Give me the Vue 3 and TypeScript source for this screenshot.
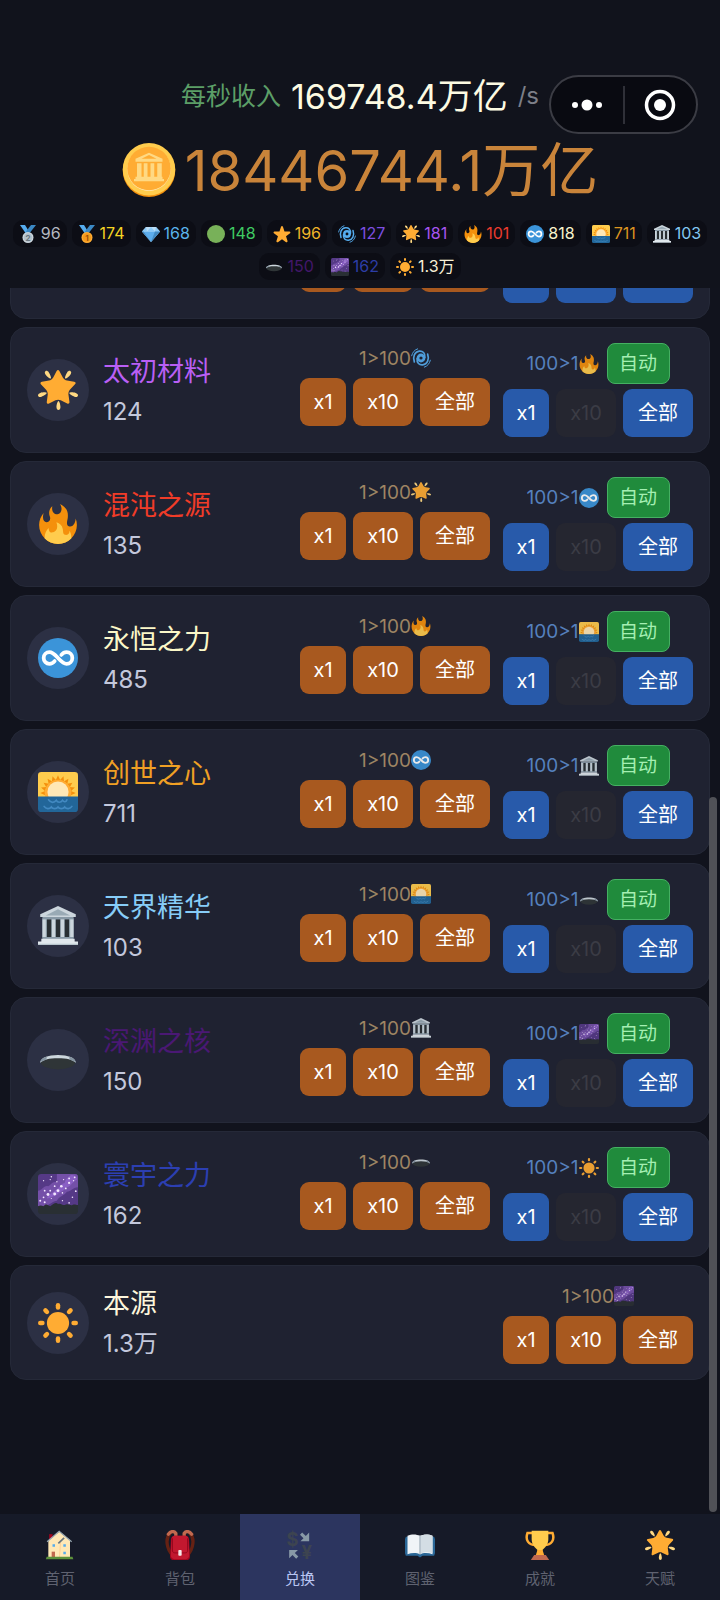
<script setup lang="ts">
interface Chip {
  icon: string
  value: string
  unit?: string
  color: string
}

interface Material {
  icon: string
  name: string
  count: string
  unit?: string
  color: string
  down: string
  up?: string
  tenEnabled?: boolean
}

interface Tab {
  icon: string
  label: string
  active?: boolean
}

interface Mark {
  text: string
  x: number
  y: number
  size: number
  fill: string
}

const chips: Chip[] = [
  { icon: 'silver', value: '96', color: '#b4b8c0' },
  { icon: 'gold', value: '174', color: '#f5d423' },
  { icon: 'gem', value: '168', color: '#5ab4ec' },
  { icon: 'green', value: '148', color: '#3fca63' },
  { icon: 'star', value: '196', color: '#f0b429' },
  { icon: 'cyclone', value: '127', color: '#7d4fe0' },
  { icon: 'glow', value: '181', color: '#a855f0' },
  { icon: 'fire', value: '101', color: '#ea3b2e' },
  { icon: 'infinity', value: '818', color: '#f7f3cc' },
  { icon: 'sunrise', value: '711', color: '#dd9420' },
  { icon: 'temple', value: '103', color: '#83c8f2' },
  { icon: 'hole', value: '150', color: '#43176a' },
  { icon: 'galaxy', value: '162', color: '#2c3da6' },
  { icon: 'sun', value: '1.3', unit: '万', color: '#f7f0d6' },
]

const materials: Material[] = [
  { icon: 'cyclone', name: '', count: '', color: '#7d4fe0', down: 'star', up: 'glow', tenEnabled: true },
  { icon: 'glow', name: '太初材料', count: '124', color: '#b95ff5', down: 'cyclone', up: 'fire' },
  { icon: 'fire', name: '混沌之源', count: '135', color: '#f03c28', down: 'glow', up: 'infinity' },
  { icon: 'infinity', name: '永恒之力', count: '485', color: '#fbf8c8', down: 'fire', up: 'sunrise' },
  { icon: 'sunrise', name: '创世之心', count: '711', color: '#f0a024', down: 'infinity', up: 'temple' },
  { icon: 'temple', name: '天界精华', count: '103', color: '#87cdf8', down: 'sunrise', up: 'hole' },
  { icon: 'hole', name: '深渊之核', count: '150', color: '#4a1874', down: 'temple', up: 'galaxy' },
  { icon: 'galaxy', name: '寰宇之力', count: '162', color: '#2c3fb2', down: 'hole', up: 'sun' },
  { icon: 'sun', name: '本源', count: '1.3', unit: '万', color: '#fdf6dc', down: 'galaxy' },
]

const tabs: Tab[] = [
  { icon: 'house', label: '首页' },
  { icon: 'backpack', label: '背包' },
  { icon: 'exchange', label: '兑换', active: true },
  { icon: 'book', label: '图鉴' },
  { icon: 'trophy', label: '成就' },
  { icon: 'glow', label: '天赋' },
]

const marks: Record<string, Mark[]> = {
  silver: [{ text: '2', x: 18, y: 31, size: 16, fill: '#66757f' }],
  gold: [{ text: '1', x: 18, y: 31, size: 16, fill: '#9a4f08' }],
  exchange: [
    { text: '$', x: 9, y: 19, size: 22, fill: '#3d4450' },
    { text: '¥', x: 26, y: 35, size: 22, fill: '#3d4450' },
  ],
}

const rays: number[] = [0, 45, 90, 135, 180, 225, 270, 315]
const sunriseRays: number[] = [-90, -72, -54, -36, -18, 0, 18, 36, 54, 72, 90]
const stars: [number, number, number][] = [
  [5, 6, 0.6], [11, 5, 0.6], [12, 2.5, 0.7], [17, 7, 0.6], [23, 5, 0.6], [28, 4, 0.8], [33, 3, 0.8],
  [15, 11, 0.8], [21, 11, 1.2], [25, 13, 0.8], [28, 8, 1], [32, 6, 0.6], [6, 15, 0.8], [11, 15, 0.8],
  [18, 15, 1.3], [22, 17, 0.7], [9, 18.5, 1.3], [15, 18, 1.3], [34, 15.5, 0.8], [5, 21, 0.8], [31, 21, 0.7],
  [2, 24, 0.9], [6, 25.5, 0.9], [22, 24, 0.6], [28, 26, 0.7], [12, 22, 0.5],
]
</script>

<template>
  <div class="app">
    <svg class="defs" aria-hidden="true">
      <symbol id="glow" viewBox="0 0 36 36">
        <path fill="#ffac33" d="M28.84 17.638c-.987 1.044-1.633 3.067-1.438 4.493l.892 6.441c.197 1.427-.701 2.087-1.996 1.469l-5.851-2.796c-1.295-.62-3.408-.611-4.7.018l-5.826 2.842c-1.291.629-2.193-.026-2.007-1.452l.843-6.449c.186-1.427-.475-3.444-1.47-4.481l-4.494-4.688c-.996-1.037-.655-2.102.755-2.365l6.37-1.188c1.41-.263 3.116-1.518 3.793-2.789L16.762.956c.675-1.271 1.789-1.274 2.473-.009L22.33 6.66c.686 1.265 2.4 2.507 3.814 2.758l6.378 1.141c1.412.252 1.761 1.314.774 2.359l-4.456 4.72z" />
        <path fill="#ffd983" d="M9.783 2.181c1.023 1.413 2.446 4.917 1.717 5.447-.728.531-3.607-1.91-4.63-3.323-1.022-1.413-.935-2.668-.131-3.254.804-.587 2.02-.282 3.044 1.13zm19.348 2.124C28.109 5.718 25.23 8.16 24.5 7.627c-.729-.53.695-4.033 1.719-5.445C27.242.768 28.457.463 29.262 1.051c.803.586.89 1.841-.131 3.254zM16.625 33.291c-.001-1.746.898-5.421 1.801-5.421.899 0 1.798 3.675 1.797 5.42 0 1.747-.804 2.712-1.8 2.71-.994.002-1.798-.962-1.798-2.709zm16.179-9.262c-1.655-.539-4.858-2.533-4.579-3.395.277-.858 4.037-.581 5.69-.041 1.655.54 2.321 1.605 2.013 2.556-.308.95-1.469 1.42-3.124.88zM2.083 20.594c1.655-.54 5.414-.817 5.694.044.276.857-2.928 2.854-4.581 3.392-1.654.54-2.818.07-3.123-.88-.308-.95.354-2.015 2.01-2.556z" />
      </symbol>
      <symbol id="star" viewBox="0 0 36 36">
        <path fill="#ffac33" d="M27.287 34.627c-.404 0-.806-.124-1.152-.371L18 28.422l-8.135 5.834c-.343.247-.743.371-1.151.371-.408 0-.811-.126-1.157-.38-.688-.5-.976-1.384-.713-2.193l3.034-9.792-8.062-5.681c-.685-.505-.97-1.393-.708-2.203.264-.808 1.016-1.36 1.866-1.363l9.947-.014L16.12 3.294c.271-.802 1.023-1.34 1.871-1.34.848 0 1.6.538 1.871 1.34L22.991 13l9.94.014c.85.003 1.604.555 1.866 1.363.263.81-.022 1.698-.708 2.203l-8.062 5.681 3.037 9.791c.262.81-.026 1.694-.713 2.194-.346.255-.751.381-1.128.381z" />
      </symbol>
      <symbol id="fire" viewBox="0 0 36 36">
        <path fill="#f4900c" d="M35 19c0-2.062-.367-4.039-1.04-5.868-.46 5.389-3.333 8.157-6.335 6.868-2.812-1.208-.917-5.917-.777-8.164.236-3.809-.012-8.169-6.931-11.794 2.875 5.5.333 8.917-2.333 9.125-2.958.231-5.667-2.542-4.667-7.042-3.238 2.386-3.332 6.402-2.333 9 1.042 2.708-.042 4.958-2.583 5.208-2.84.28-4.418-3.041-2.963-8.333C2.52 10.965 1 14.805 1 19c0 9.389 7.611 17 17 17s17-7.611 17-17z" />
        <path fill="#ffcc4d" d="M28.394 23.999c.148 3.084-2.561 4.293-4.019 3.709-2.106-.843-1.541-2.291-2.083-5.291s-2.625-5.083-5.708-6c2.25 6.333-1.247 8.667-3.08 9.084-1.872.426-3.753-.001-3.968-4.007C7.352 23.668 6 26.676 6 30c0 .368.023.73.055 1.09C9.125 34.124 13.342 36 18 36s8.875-1.876 11.945-4.91c.032-.36.055-.722.055-1.09 0-2.187-.584-4.236-1.606-6.001z" />
      </symbol>
      <symbol id="infinity" viewBox="0 0 36 36">
        <circle cx="18" cy="18" r="18" fill="#3b94d9" />
        <path fill="none" stroke="#fff" stroke-width="3.400" stroke-linecap="round" d="M15 20.800C13.500 22.600 12 23.200 10.300 23.200c-2.900 0-5.200-2.300-5.200-5.200s2.300-5.200 5.200-5.200c3 0 4.900 2.200 7.700 5.200s4.700 5.200 7.700 5.200c2.900 0 5.200-2.300 5.200-5.200s-2.300-5.200-5.200-5.200c-1.700 0-3.200.6-4.700 2.400" />
      </symbol>
      <symbol id="sunrise" viewBox="0 0 36 36">
        <path fill="#ffcc4d" d="M3 0h30a3 3 0 0 1 3 3v20H0V3a3 3 0 0 1 3-3z" />
        <path v-for="r in sunriseRays" :key="r" fill="#f4900c" :transform="`rotate(${r} 18 19)`" d="M16 7.500 18 3l2 4.500z" />
        <circle cx="18" cy="19" r="12" fill="#ffac33" />
        <circle cx="18" cy="18" r="9.500" fill="#ffe8b6" />
        <path fill="#226699" d="M0 22h36v11a3 3 0 0 1-3 3H3a3 3 0 0 1-3-3z" />
        <path fill="none" stroke="#4289c1" stroke-width="1.500" stroke-linecap="round" d="M9.500 25c2 3 5 3 7 .5 1 2 4 2.500 5.500 0 1.500 2 3.500 1.500 4-.5M5.500 31c1.500 2.500 5 2.500 6.500.5 1.500 2 4.500 2 6 0 1.500 2 4.500 2 6 0 1.500 2 5 2 6.500-.5" />
      </symbol>
      <symbol id="temple" viewBox="0 0 36 36">
        <path fill="#99aab5" d="M4 11h28v18H4z" />
        <path fill="#292f33" d="M8 12h4v16H8zM16 12h4v16h-4zM24 12h4v16h-4z" />
        <path fill="#ccd6dd" d="M4 12h3v16H4zM12.500 12h3v16h-3zM20.500 12h3v16h-3zM29 12h3v16h-3z" />
        <path fill="#8899a6" d="M4 10h28v2H4zM4 28h28v2H4z" />
        <path fill="#ccd6dd" d="M18 0 34 7.500V10H2V7.500z" />
        <path fill="#99aab5" d="M18 3 29 8.500H7z" />
        <path fill="#e1e8ed" d="M3 29.500h30V32H3zM0 32h36v3H0z" />
        <path fill="#b8c5cd" d="M0 34h36v1H0z" />
      </symbol>
      <symbol id="hole" viewBox="0 0 36 36">
        <ellipse cx="18" cy="20" rx="15.500" ry="6.500" fill="#2f3537" />
        <path fill="#ccd6dd" d="M2 20.500C2 16 9 13.500 18 13.500s16 2.500 16 7c-3-2.700-8-4-16-4s-13 1.300-16 4z" />
        <path fill="#8493a0" d="M2 20.500c0-2.500 2.500-4.500 6-5.600L7.500 17.800c-2.500.7-4.300 1.600-5.500 2.700zM34 20.500c0-2.500-2.500-4.500-6-5.600l.5 2.900c2.500.7 4.300 1.600 5.500 2.700z" />
      </symbol>
      <symbol id="galaxy" viewBox="0 0 36 36">
        <path fill="#553986" d="M3 0h30a3 3 0 0 1 3 3v28H0V3a3 3 0 0 1 3-3z" />
        <path fill="#7450a8" d="M17 0h16a3 3 0 0 1 3 3v9c-5 0-6 4-10 4-3 4-7 4-9 8-6 1-7 6-17 5V15c4 0 5-5 9-4 3-1 3-4 8-4z" />
        <path fill="#8a5fc4" d="M30 1c2 0 5 1 5 4-4 2-5 6-9 7-3 4-7 4-9 7-4 1-5 3-9 3 1-4 5-4 7-7 4-2 5-6 9-7 1-4 4-6 6-7z" />
        <circle v-for="([x, y, r], i) in stars" :key="i" :cx="x" :cy="y" :r="r" fill="#f4e8ff" />
        <path fill="#292f33" d="M0 29c2-1 3-1 5 0 2-3 4-1 6 0 3-2 5-4 7-2 3-1 3 1 6 1 3-2 5 1 7 0 2-1 3 0 5 0v5a3 3 0 0 1-3 3H3a3 3 0 0 1-3-3z" />
      </symbol>
      <symbol id="sun" viewBox="0 0 36 36">
        <circle cx="18" cy="18" r="10" fill="#ffac33" />
        <rect v-for="r in rays" :key="r" x="16" y="0" width="4" height="6" rx="2" fill="#ffac33" :transform="`rotate(${r} 18 18)`" />
      </symbol>
      <symbol id="cyclone" viewBox="0 0 36 36">
        <g fill="none" stroke="#55acee" stroke-linecap="round">
          <circle cx="18" cy="18" r="5.400" stroke-width="5" />
          <path stroke-width="3" d="M6 25C2.500 15 7 6.500 15 5.600c6-.6 11 3.400 10 11.400M30 11c3.500 10-1 18.500-9 19.400-6 .6-11-3.400-10-11.400" />
          <path stroke-width="1.800" d="M1.200 14C2.500 8 6 3.500 12 1.500M34.800 22c-1.300 6-4.800 10.500-10.800 12.500" />
        </g>
      </symbol>
      <symbol id="green" viewBox="0 0 36 36">
        <circle cx="18" cy="18" r="18" fill="#78b159" />
      </symbol>
      <symbol id="gem" viewBox="0 0 36 36">
        <path fill="#bdddf4" d="M8 4h20l8 9-18 21L0 13z" />
        <path fill="#5dadec" d="M0 13h36L18 34z" />
        <path fill="#8ccaf7" d="M10 13 18 4l8 9zM8 4 0 13h10zM28 4l8 9H26z" />
        <path fill="#4289c1" d="M26 13h10L18 34zM0 13h3l15 21z" />
      </symbol>
      <symbol id="silver" viewBox="0 0 36 36">
        <path fill="#55acee" d="M2 0h10l8 13-5 6z" />
        <path fill="#3b88c3" d="M34 0H24L14 13l5 6z" />
        <circle cx="18" cy="25" r="11" fill="#ccd6dd" />
        <circle cx="18" cy="25" r="8.500" fill="#b3c0c9" />
      </symbol>
      <symbol id="gold" viewBox="0 0 36 36">
        <path fill="#55acee" d="M2 0h10l8 13-5 6z" />
        <path fill="#3b88c3" d="M34 0H24L14 13l5 6z" />
        <circle cx="18" cy="25" r="11" fill="#ffac33" />
        <circle cx="18" cy="25" r="8.500" fill="#f49a1c" />
      </symbol>
      <symbol id="coin" viewBox="0 0 36 36">
        <circle cx="18" cy="18.500" r="17.500" fill="#f4900c" />
        <circle cx="18" cy="17.500" r="17.500" fill="#ffcc4d" />
        <circle cx="18" cy="17.500" r="14.500" fill="#ffe8b6" />
        <circle cx="18" cy="17" r="14.500" fill="#ffac33" />
        <path fill="#ffd983" d="M18 6.500 27 10.500V12.500H9V10.500zM10 13.500h3v9h-3zM14.500 13.500h2.500v9h-2.500zM19 13.500h2.500v9H19zM23.500 13.500h3v9h-3zM9 22.500h18v1.500H9zM8 24h20v1.500H8z" />
        <path fill="#ffac33" d="m18 8 5 2.500H13z" />
      </symbol>
      <symbol id="house" viewBox="0 0 36 36">
        <path fill="#a0041e" d="M5 5h4v7H5z" />
        <path fill="#ffe8b6" d="M4 13 17 2l13 10v21H4z" />
        <path fill="#ffcc8d" d="m18 14-1 19h1l1-18z" />
        <path fill="none" stroke="#9aaab4" stroke-width="1.500" d="M2.500 14 17 1.500 32 14" />
        <path stroke="#66757f" stroke-width="2" d="m16 16 7-6.500" />
        <path fill="#55acee" d="M9 17h3v3H9zM22 17h3v3h-3zM22 26h3v3h-3z" />
        <path fill="#c1694f" d="M8 26h4v7H8z" />
        <path fill="#5c913b" d="M2 32h31l1 3H1z" />
      </symbol>
      <symbol id="backpack" viewBox="0 0 36 36">
        <g fill="none" stroke-linecap="round">
          <path stroke="#662113" stroke-width="4" d="M6 4C0 10 2 23 9 30M30 4c6 6 4 19-3 26" />
          <path stroke="#c1694f" stroke-width="4" d="M4 5c3-4 7-4 9-1v4M32 5c-3-4-7-4-9-1v4" />
        </g>
        <path fill="#a0041e" d="M12 7h12c4 0 5 3 5 6l1 19c0 3-2 4-4 4H10c-2 0-4-1-4-4l1-19c0-3 1-6 5-6z" />
        <path fill="#c2182f" d="M12 7h12c3 0 4 2 4 4l1 20c0 2-2 4-4 4H11c-2 0-4-2-4-4l1-20c0-2 1-4 4-4z" />
        <path fill="none" stroke="#8f041b" d="M9 10v15c0 2 2 2.500 3 2.500h12c2 0 3-1 3-2.500V10" />
        <rect x="16" y="24" width="4" height="7" rx="1" fill="#f5e8e8" />
      </symbol>
      <symbol id="exchange" viewBox="0 0 36 36">
        <path fill="#8899a6" d="M29 3v10.500H18.500l3.700-3.700-4.200-4.200 2.600-2.600 4.400 4.200zM5 34V24h10.500l-3.700 3.700 4.200 4.200-2.600 2.600-4.400-4.400z" />
      </symbol>
      <symbol id="book" viewBox="0 0 36 36">
        <path fill="#2a6797" d="M1 8h34l1 3v17l-1 3H21l-3 2-3-2H1l-1-3V11z" />
        <path fill="#f0f4f7" d="M3 7c5-2.500 11-2 15 0v22c-4-2-10-2-15 0zM33 7c-5-2.500-11-2-15 0v22c4-2 10-2 15 0z" />
        <path fill="#d3dde4" d="M18 8c4-3 10-3.500 15-1v21c-5-2-11-1.500-15 1z" />
        <path fill="#b4c1ca" d="M17 7h2v22h-2z" />
      </symbol>
      <symbol id="trophy" viewBox="0 0 36 36">
        <path fill="none" stroke="#ffac33" stroke-width="3" d="M9 3.500H3C0 12 4 18 13 18M27 3.500h6C36 12 32 18 23 18" />
        <path fill="#ffcc4d" d="M8 1h20v10c0 6-4 10-7 13v5h-6v-5c-3-3-7-7-7-13z" />
        <path fill="#ffac33" d="M15 24h6l2 6H13z" />
        <path fill="#c1694f" d="M11 30h14l4 6H7z" />
      </symbol>
    </svg>

    <header class="top">
      <div class="income">
        <span class="income-label">每秒收入</span>
        <span class="income-value">169748.4<span class="income-unit">万亿</span></span>
        <span class="per">/s</span>
      </div>
      <div class="balance">
        <svg class="coin" aria-hidden="true"><use href="#coin" /></svg>
        <span class="balance-value">18446744.1<span class="balance-unit">万亿</span></span>
      </div>
      <ul class="chips">
        <li v-for="chip in chips" :key="chip.icon" class="chip" :style="{ color: chip.color }">
          <svg class="chip-icon" viewBox="0 0 36 36" aria-hidden="true">
            <use :href="'#' + chip.icon" width="36" height="36" />
            <text v-for="k in marks[chip.icon]" :key="k.text" :x="k.x" :y="k.y" :font-size="k.size" :fill="k.fill" text-anchor="middle" font-weight="700">{{ k.text }}</text>
          </svg>
          <span>{{ chip.value }}{{ chip.unit }}</span>
        </li>
      </ul>
      <div class="capsule">
        <button type="button" class="capsule-btn" aria-label="更多">
          <svg class="capsule-icon" viewBox="0 0 32 32" aria-hidden="true">
            <circle cx="4" cy="16" r="3" fill="#fff" />
            <circle cx="16" cy="16" r="5.500" fill="#fff" />
            <circle cx="28" cy="16" r="3" fill="#fff" />
          </svg>
        </button>
        <button type="button" class="capsule-btn" aria-label="关闭">
          <svg class="capsule-icon" viewBox="0 0 32 32" aria-hidden="true">
            <circle cx="16" cy="16" r="13.500" fill="none" stroke="#fff" stroke-width="3.500" />
            <circle cx="16" cy="16" r="6" fill="#fff" />
          </svg>
        </button>
      </div>
    </header>

    <main class="scroller">
      <section v-for="m in materials" :key="m.icon" class="card">
        <div class="avatar">
          <svg class="avatar-icon" aria-hidden="true"><use :href="'#' + m.icon" /></svg>
        </div>
        <div class="info">
          <h2 class="name" :style="{ color: m.color }">{{ m.name }}</h2>
          <p class="count">{{ m.count }}{{ m.unit }}</p>
        </div>
        <div class="group down">
          <div class="rate">
            <template v-if="m.name">1&gt;100</template>
            <svg class="rate-icon" aria-hidden="true"><use :href="'#' + m.down" /></svg>
          </div>
          <div class="actions">
            <button type="button"><template v-if="m.name">x1</template></button>
            <button type="button"><template v-if="m.name">x10</template></button>
            <button type="button"><template v-if="m.name">全部</template></button>
          </div>
        </div>
        <div v-if="m.up" class="group up">
          <div class="rate">
            <template v-if="m.name">100&gt;1</template>
            <svg class="rate-icon" aria-hidden="true"><use :href="'#' + m.up" /></svg>
            <button type="button" class="auto"><template v-if="m.name">自动</template></button>
          </div>
          <div class="actions">
            <button type="button"><template v-if="m.name">x1</template></button>
            <button type="button" :disabled="!m.tenEnabled"><template v-if="m.name">x10</template></button>
            <button type="button"><template v-if="m.name">全部</template></button>
          </div>
        </div>
      </section>
      <div class="thumb"></div>
    </main>

    <nav class="tabs">
      <a v-for="t in tabs" :key="t.label" href="#" class="tab" :class="{ active: t.active }">
        <svg class="tab-icon" viewBox="0 0 36 36" aria-hidden="true">
          <use :href="'#' + t.icon" width="36" height="36" />
          <text v-for="k in marks[t.icon]" :key="k.text" :x="k.x" :y="k.y" :font-size="k.size" :fill="k.fill" text-anchor="middle" font-weight="700">{{ k.text }}</text>
        </svg>
        <span>{{ t.label }}</span>
      </a>
    </nav>
  </div>
</template>

<style>
body {
  margin: 0;
  background: #11131d;
}
</style>

<style scoped>
.app {
  display: flex;
  flex-direction: column;
  height: 100vh;
  overflow: hidden;
  position: relative;
  background: #11131d;
  color: #c3c8dc;
  font-family: Inter, "Noto Sans CJK SC", sans-serif;
}

.defs {
  position: absolute;
  width: 0;
  height: 0;
}

button {
  font: inherit;
  line-height: 1;
  border: 0;
  padding: 0;
  cursor: pointer;
}

.top {
  flex: none;
  position: relative;
  padding: 72px 10px 8px;
  background: #11131c;
}

.income {
  display: flex;
  justify-content: center;
  align-items: center;
  gap: 10px;
  height: 48px;
  line-height: 48px;
}

.income-label {
  font-size: 25px;
  color: #5c9e67;
}

.income-value {
  font-size: 34px;
  color: #fdfbe2;
}

.income-unit {
  font-size: 35px;
}

.per {
  font-size: 24px;
  color: #7d7f88;
}

.balance {
  display: flex;
  justify-content: center;
  align-items: center;
  gap: 9px;
  height: 100px;
  line-height: 100px;
}

.coin {
  width: 54px;
  height: 54px;
}

.balance-value {
  font-size: 56px;
  color: #c9843a;
}

.balance-unit {
  font-size: 58px;
}

.chips {
  display: flex;
  flex-wrap: wrap;
  justify-content: center;
  gap: 6px 5px;
  margin: 0 -10px;
  padding: 0;
  list-style: none;
}

.chip {
  display: flex;
  align-items: center;
  gap: 4px;
  height: 27px;
  padding: 0 6px;
  border-radius: 10px;
  background: #0c0d15;
  font-size: 16px;
  line-height: 27px;
}

.chip-icon {
  width: 18px;
  height: 18px;
}

.capsule {
  position: absolute;
  top: 75px;
  right: 22px;
  display: flex;
  align-items: center;
  box-sizing: border-box;
  width: 149px;
  height: 59px;
  border: 2px solid #3b3c44;
  border-radius: 30px;
  background: #090a11;
}

.capsule-btn {
  flex: 1;
  display: flex;
  align-items: center;
  justify-content: center;
  height: 38px;
  background: none;
}

.capsule-btn + .capsule-btn {
  border-left: 2px solid #2f3038;
}

.capsule-icon {
  width: 32px;
  height: 32px;
}

.scroller {
  flex: 1;
  min-height: 0;
  position: relative;
  display: flex;
  flex-direction: column;
  justify-content: flex-end;
  gap: 8px;
  padding: 0 10px 134px;
  overflow: hidden;
}

.card {
  flex: none;
  display: flex;
  align-items: center;
  padding: 15px 16px;
  border: 1px solid #252938;
  border-radius: 16px;
  background: #1f2231;
}

.avatar {
  display: flex;
  align-items: center;
  justify-content: center;
  width: 62px;
  height: 62px;
  border-radius: 50%;
  background: #2c3044;
}

.avatar-icon {
  width: 40px;
  height: 40px;
}

.info {
  flex: 1;
  margin-left: 14px;
  padding-top: 3px;
}

.name,
.count {
  margin: 0;
  font-weight: 400;
  line-height: 40px;
}

.name {
  font-size: 27px;
}

.count {
  font-size: 24px;
}

.group {
  align-self: flex-start;
  display: flex;
  flex-direction: column;
  gap: 5px;
}

.up {
  margin-left: 13px;
}

.rate {
  display: flex;
  align-items: center;
  justify-content: center;
  height: 30px;
  font-size: 19px;
}

.down .rate {
  color: #9d8463;
}

.up .rate {
  height: 41px;
  color: #5580bd;
}

.rate-icon {
  width: 20px;
  height: 20px;
  opacity: 0.9;
}

.auto {
  box-sizing: border-box;
  width: 63px;
  height: 41px;
  margin-left: 8px;
  border: 1px solid #45b062;
  border-radius: 8px;
  background: #208b3c;
  color: #a4efb2;
}

.actions {
  display: grid;
  grid-template-columns: 46px 60px 70px;
  gap: 7px;
}

.actions button {
  height: 48px;
  border-radius: 9px;
  font-size: 20px;
  color: #fff;
}

.down .actions button {
  background: #a8591f;
}

.up .actions button {
  background: #285aaa;
}

.up .actions button:disabled {
  background: #252630;
  color: #3b3c45;
}

.thumb {
  position: absolute;
  right: 3px;
  bottom: 2px;
  width: 8px;
  height: calc(58% + 4px);
  border-radius: 4px;
  background: #505157;
}

.tabs {
  flex: none;
  display: flex;
  background: #161a28;
}

.tab {
  flex: 1;
  display: flex;
  flex-direction: column;
  align-items: center;
  gap: 7px;
  padding: 16px 0 10px;
  font-size: 15px;
  line-height: 23px;
  color: #5f6270;
  text-decoration: none;
}

.tab.active {
  background: #2c355f;
  color: #b9c5f2;
}

.tab-icon {
  width: 30px;
  height: 30px;
  overflow: visible;
}
</style>
